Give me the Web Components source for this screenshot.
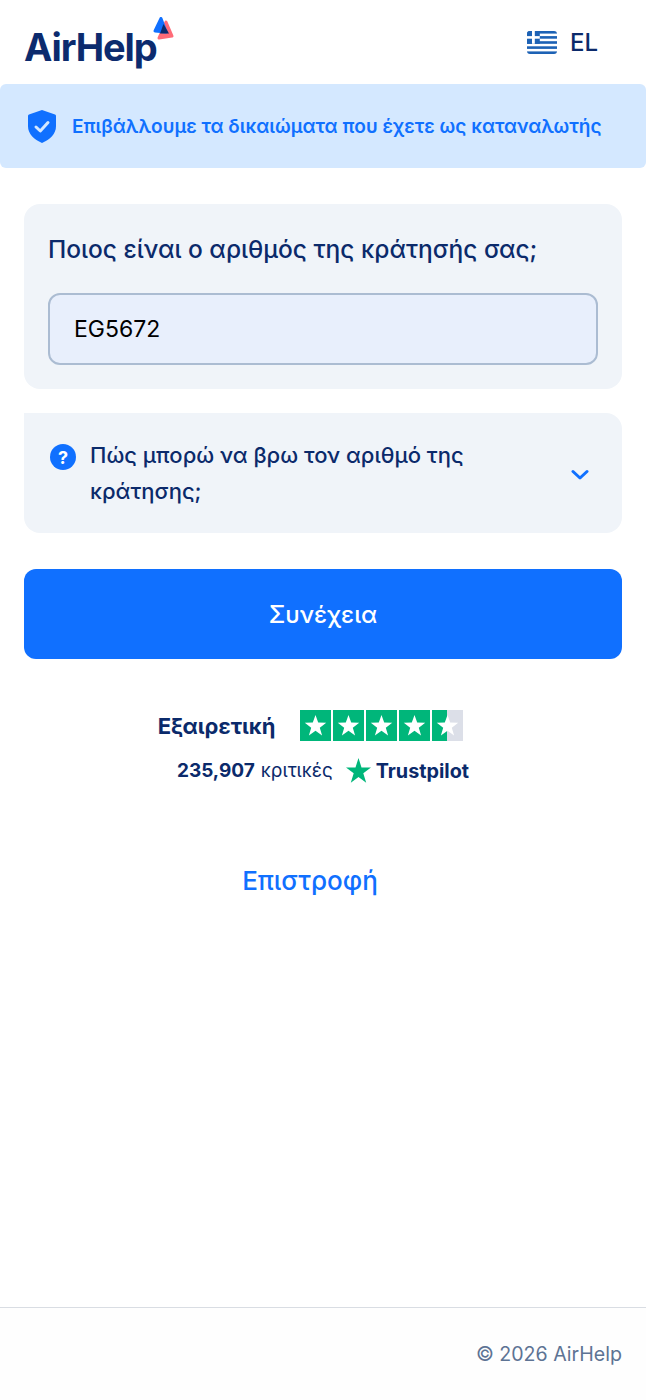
<!DOCTYPE html><html><head><meta charset="utf-8"><style>html,body{margin:0;background:#fff}</style></head><body><ah-page></ah-page><script>
const star='<polygon points="15.5,5 18.2,12.6 26.2,12.8 19.8,17.7 22.1,25.4 15.5,20.8 8.9,25.4 11.2,17.7 4.8,12.8 12.8,12.6" fill="#fff"/>';
const cell=(half)=>`<svg width="31" height="31" viewBox="0 0 31 31">${half?'<rect width="31" height="31" fill="#dcdfe8"/><rect width="15" height="31" fill="#00b67a"/>':'<rect width="31" height="31" fill="#00b67a"/>'}${star}</svg>`;
class AhPage extends HTMLElement{constructor(){super();this.attachShadow({mode:'open'}).innerHTML=`<style>
:host{display:flex;flex-direction:column;height:1400px;font-family:Inter,"Noto Sans",sans-serif;color:#0b2a6b;box-sizing:border-box;overflow:hidden}
header{height:84px;display:flex;align-items:center;justify-content:space-between;padding:0 48px 0 24px;box-sizing:border-box}
.logo{position:relative;font:700 38px Inter;letter-spacing:-1.05px;color:#0c2b6e;padding-top:10px}
.logo svg{position:absolute;left:128px;top:2px}
.lang{display:flex;align-items:center;gap:13px;font-size:24px;font-weight:500}
.banner{height:84px;background:#d4e8ff;border-radius:6px;display:flex;align-items:center;gap:16px;padding-left:28px;color:#1070ff;font-size:19.1px;font-weight:600}
main{padding:36px 24px 0;display:flex;flex-direction:column}
.card{background:#f0f4f9;border-radius:16px;padding:30px 24px 24px;box-sizing:border-box}
.card h2{font-size:24.5px;font-weight:500;margin:0 0 27px;line-height:32px;position:relative;top:-1px}
.inp{height:72px;box-sizing:border-box;border:2px solid #abbcd2;border-radius:12px;background:#e8effc;padding-left:24px;display:flex;align-items:center;color:#000;font-size:23px}
.faq{background:#f0f4f9;border-radius:0 16px 16px 16px;margin-top:24px;height:120px;display:flex;align-items:center;padding:0 33px 0 26px;box-sizing:border-box;gap:14px;font-size:22px;font-weight:500;line-height:36px}
.faq span{flex:1}
.q{align-self:flex-start;margin-top:31px}
.chev{margin-top:4px}
.btn{margin-top:36px;height:90px;background:#1070ff;border-radius:12px;color:#fff;font-size:24px;font-weight:500;display:flex;align-items:center;justify-content:center}
.tp{display:flex;flex-direction:column;align-items:center;margin-top:51px}
.r1{display:flex;align-items:center;gap:25px;font-size:22px;font-weight:700;padding-right:25px}
.stars{display:flex;gap:2px}
.r2{display:flex;align-items:center;margin-top:17px;font-size:19px}
.r2 b{font-weight:700}.r2 .tpl{font-size:19.8px;margin-left:5px}.r2 svg{margin-left:13px}.r2 .kr{margin-left:6px}
.back{margin-top:82px;text-align:center;padding-right:26px;color:#1070ff;font-size:26px;font-weight:500}
footer{margin-top:auto;height:93px;border-top:1px solid #d9dde3;background:#fefefe;box-sizing:border-box;display:flex;justify-content:flex-end;padding:34px 24px 0;color:#5d7394;font-size:19.6px}
</style>
<header><div class="logo">AirHelp<svg width="24" height="26" viewBox="0 0 24 26"><path d="M14 6 20 20 7 22Z" fill="#ff6b78" stroke="#ff6b78" stroke-width="3" stroke-linejoin="round"/><path d="M9 2.500 3 15l11 1z" fill="#1070ff" stroke="#1070ff" stroke-width="3" stroke-linejoin="round"/><path d="M11.500 8 8 17.500h9z" fill="#0b2a6b"/></svg></div>
<div class="lang"><svg width="30" height="23" viewBox="0 0 30 23"><defs><clipPath id="f"><rect width="30" height="23" rx="3"/></clipPath></defs><g clip-path="url(#f)"><rect width="30" height="23" fill="#fff"/><g fill="#1d62b5"><rect width="30" height="2.600"/><rect y="5.100" width="30" height="2.600"/><rect y="10.200" width="30" height="2.600"/><rect y="15.300" width="30" height="2.600"/><rect y="20.400" width="30" height="2.600"/><rect width="12.800" height="12.800"/></g><rect x="5" width="2.800" height="12.800" fill="#fff"/><rect y="5.100" width="12.800" height="2.600" fill="#fff"/></g></svg>EL</div></header>
<div class="banner"><svg width="28" height="33" viewBox="0 0 28 33"><path d="M14 0 27 4.500c.7.3 1 .8 1 1.500V16c0 8-6 13.500-14 17C6 29.500 0 24 0 16V6c0-.7.3-1.200 1-1.500z" fill="#1070ff"/><path d="m8 17 4.300 4L20 12.500" fill="none" stroke="#d4e8ff" stroke-width="3" stroke-linecap="round" stroke-linejoin="round"/></svg>Επιβάλλουμε τα δικαιώματα που έχετε ως καταναλωτής</div>
<main><div class="card"><h2>Ποιος είναι ο αριθμός της κράτησής σας;</h2><div class="inp">EG5672</div></div>
<div class="faq"><svg class="q" width="26" height="26" viewBox="0 0 26 26"><circle cx="13" cy="13" r="13" fill="#1070ff"/><text x="13" y="19.500" text-anchor="middle" font-size="18" font-weight="700" fill="#fff" font-family="Inter">?</text></svg><span>Πώς μπορώ να βρω τον αριθμό της κράτησης;</span><svg class="chev" width="18" height="12" viewBox="0 0 18 12"><path d="m2 2.500 7 6.500 7-6.500" fill="none" stroke="#1070ff" stroke-width="3" stroke-linecap="round" stroke-linejoin="round"/></svg></div>
<div class="btn">Συνέχεια</div>
<div class="tp"><div class="r1">Εξαιρετική<div class="stars">${cell()}${cell()}${cell()}${cell()}${cell(1)}</div></div><div class="r2"><b>235,907</b><span class="kr">κριτικές</span><svg width="25" height="25" viewBox="0 0 25 25"><polygon points="12.500,0 15.500,9.400 25,9.400 17.300,15.200 20.200,24.800 12.500,18.900 4.800,24.800 7.700,15.200 0,9.400 9.500,9.400" fill="#00b67a"/></svg><b class="tpl">Trustpilot</b></div></div>
<div class="back">Επιστροφή</div></main>
<footer>© 2026 AirHelp</footer>`}}
customElements.define('ah-page',AhPage);
</script></body></html>
